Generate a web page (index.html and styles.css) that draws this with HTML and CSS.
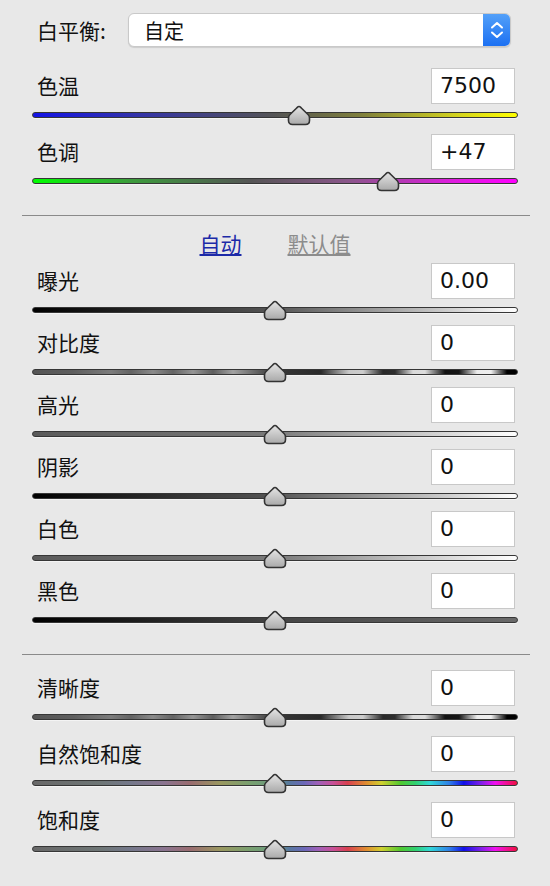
FILE: index.html
```html
<!doctype html>
<html>
<head>
    <title>基本</title>
    <meta charset="utf-8"/>
    <meta name="viewport" content="width=device-width, initial-scale=1"/>
    <link rel="stylesheet" href="styles.css">
</head>
<body>
<svg class="defs" width="0" height="0" aria-hidden="true">
    <defs>
        <linearGradient id="knob" x1="0" y1="0" x2="0" y2="1">
            <stop offset="0" stop-color="#e4e4e4"/>
            <stop offset="1" stop-color="#a9a9a9"/>
        </linearGradient>
    </defs>
</svg>

<div class="panel">
    <div class="wb">
        <span class="wb-label">白平衡:</span>
        <div class="select">
            <span class="select-text">自定</span>
            <span class="stepper">
                <svg width="28" height="34" viewBox="0 0 28 34">
                    <path d="M9 14.5 L14 10 L19 14.5" fill="none" stroke="#fff" stroke-width="2" stroke-linecap="round" stroke-linejoin="round"/>
                    <path d="M9 19.5 L14 24 L19 19.5" fill="none" stroke="#fff" stroke-width="2" stroke-linecap="round" stroke-linejoin="round"/>
                </svg>
            </span>
        </div>
    </div>

    <div class="group group-wide">
        <div class="ctl">
            <div class="head"><span class="label">色温</span><span class="value">7500</span></div>
            <div class="track t-temp"><svg class="thumb" style="left: 55%" viewBox="0 0 24 21"><path d="M12 1.5C13 1.5 13.5 2.2 14.3 3L21 9.5C22 10.5 22.5 11.5 22.5 13L22.5 15.5C22.5 18 21 19.5 18.5 19.5L5.5 19.5C3 19.5 1.5 18 1.5 15.5L1.5 13C1.5 11.5 2 10.5 3 9.5L9.7 3C10.5 2.2 11 1.5 12 1.5Z"/></svg></div>
        </div>
        <div class="ctl">
            <div class="head"><span class="label">色调</span><span class="value">+47</span></div>
            <div class="track t-tint"><svg class="thumb" style="left: 73.3%" viewBox="0 0 24 21"><path d="M12 1.5C13 1.5 13.5 2.2 14.3 3L21 9.5C22 10.5 22.5 11.5 22.5 13L22.5 15.5C22.5 18 21 19.5 18.5 19.5L5.5 19.5C3 19.5 1.5 18 1.5 15.5L1.5 13C1.5 11.5 2 10.5 3 9.5L9.7 3C10.5 2.2 11 1.5 12 1.5Z"/></svg></div>
        </div>
    </div>

    <hr class="rule">

    <div class="links">
        <a class="link-auto" href="#">自动</a>
        <a class="link-default" href="#">默认值</a>
    </div>

    <div class="group group-tight">
        <div class="ctl">
            <div class="head"><span class="label">曝光</span><span class="value">0.00</span></div>
            <div class="track t-exp"><svg class="thumb" style="left: 50%" viewBox="0 0 24 21"><path d="M12 1.5C13 1.5 13.5 2.2 14.3 3L21 9.5C22 10.5 22.5 11.5 22.5 13L22.5 15.5C22.5 18 21 19.5 18.5 19.5L5.5 19.5C3 19.5 1.5 18 1.5 15.5L1.5 13C1.5 11.5 2 10.5 3 9.5L9.7 3C10.5 2.2 11 1.5 12 1.5Z"/></svg></div>
        </div>
        <div class="ctl">
            <div class="head"><span class="label">对比度</span><span class="value">0</span></div>
            <div class="track t-bands"><svg class="thumb" style="left: 50%" viewBox="0 0 24 21"><path d="M12 1.5C13 1.5 13.5 2.2 14.3 3L21 9.5C22 10.5 22.5 11.5 22.5 13L22.5 15.5C22.5 18 21 19.5 18.5 19.5L5.5 19.5C3 19.5 1.5 18 1.5 15.5L1.5 13C1.5 11.5 2 10.5 3 9.5L9.7 3C10.5 2.2 11 1.5 12 1.5Z"/></svg></div>
        </div>
        <div class="ctl">
            <div class="head"><span class="label">高光</span><span class="value">0</span></div>
            <div class="track t-light"><svg class="thumb" style="left: 50%" viewBox="0 0 24 21"><path d="M12 1.5C13 1.5 13.5 2.2 14.3 3L21 9.5C22 10.5 22.5 11.5 22.5 13L22.5 15.5C22.5 18 21 19.5 18.5 19.5L5.5 19.5C3 19.5 1.5 18 1.5 15.5L1.5 13C1.5 11.5 2 10.5 3 9.5L9.7 3C10.5 2.2 11 1.5 12 1.5Z"/></svg></div>
        </div>
        <div class="ctl">
            <div class="head"><span class="label">阴影</span><span class="value">0</span></div>
            <div class="track t-exp"><svg class="thumb" style="left: 50%" viewBox="0 0 24 21"><path d="M12 1.5C13 1.5 13.5 2.2 14.3 3L21 9.5C22 10.5 22.5 11.5 22.5 13L22.5 15.5C22.5 18 21 19.5 18.5 19.5L5.5 19.5C3 19.5 1.5 18 1.5 15.5L1.5 13C1.5 11.5 2 10.5 3 9.5L9.7 3C10.5 2.2 11 1.5 12 1.5Z"/></svg></div>
        </div>
        <div class="ctl">
            <div class="head"><span class="label">白色</span><span class="value">0</span></div>
            <div class="track t-light"><svg class="thumb" style="left: 50%" viewBox="0 0 24 21"><path d="M12 1.5C13 1.5 13.5 2.2 14.3 3L21 9.5C22 10.5 22.5 11.5 22.5 13L22.5 15.5C22.5 18 21 19.5 18.5 19.5L5.5 19.5C3 19.5 1.5 18 1.5 15.5L1.5 13C1.5 11.5 2 10.5 3 9.5L9.7 3C10.5 2.2 11 1.5 12 1.5Z"/></svg></div>
        </div>
        <div class="ctl">
            <div class="head"><span class="label">黑色</span><span class="value">0</span></div>
            <div class="track t-dark"><svg class="thumb" style="left: 50%" viewBox="0 0 24 21"><path d="M12 1.5C13 1.5 13.5 2.2 14.3 3L21 9.5C22 10.5 22.5 11.5 22.5 13L22.5 15.5C22.5 18 21 19.5 18.5 19.5L5.5 19.5C3 19.5 1.5 18 1.5 15.5L1.5 13C1.5 11.5 2 10.5 3 9.5L9.7 3C10.5 2.2 11 1.5 12 1.5Z"/></svg></div>
        </div>
    </div>

    <hr class="rule">

    <div class="group group-wide">
        <div class="ctl">
            <div class="head"><span class="label">清晰度</span><span class="value">0</span></div>
            <div class="track t-bands"><svg class="thumb" style="left: 50%" viewBox="0 0 24 21"><path d="M12 1.5C13 1.5 13.5 2.2 14.3 3L21 9.5C22 10.5 22.5 11.5 22.5 13L22.5 15.5C22.5 18 21 19.5 18.5 19.5L5.5 19.5C3 19.5 1.5 18 1.5 15.5L1.5 13C1.5 11.5 2 10.5 3 9.5L9.7 3C10.5 2.2 11 1.5 12 1.5Z"/></svg></div>
        </div>
        <div class="ctl">
            <div class="head"><span class="label">自然饱和度</span><span class="value">0</span></div>
            <div class="track t-sat"><svg class="thumb" style="left: 50%" viewBox="0 0 24 21"><path d="M12 1.5C13 1.5 13.5 2.2 14.3 3L21 9.5C22 10.5 22.5 11.5 22.5 13L22.5 15.5C22.5 18 21 19.5 18.5 19.5L5.5 19.5C3 19.5 1.5 18 1.5 15.5L1.5 13C1.5 11.5 2 10.5 3 9.5L9.7 3C10.5 2.2 11 1.5 12 1.5Z"/></svg></div>
        </div>
        <div class="ctl">
            <div class="head"><span class="label">饱和度</span><span class="value">0</span></div>
            <div class="track t-sat"><svg class="thumb" style="left: 50%" viewBox="0 0 24 21"><path d="M12 1.5C13 1.5 13.5 2.2 14.3 3L21 9.5C22 10.5 22.5 11.5 22.5 13L22.5 15.5C22.5 18 21 19.5 18.5 19.5L5.5 19.5C3 19.5 1.5 18 1.5 15.5L1.5 13C1.5 11.5 2 10.5 3 9.5L9.7 3C10.5 2.2 11 1.5 12 1.5Z"/></svg></div>
        </div>
    </div>
</div>
</body>
</html>
```

FILE: styles.css
```css
body {
margin: 0;
padding: 0;
background-color: #e8e8e8;
color: #111;
font-family: "Noto Sans CJK SC", "DejaVu Sans", sans-serif;
}
.defs {
position: absolute;
}
.panel {
padding: 13px 20px 30px 22px;
}

/* white balance */
.wb {
display: flex;
align-items: center;
padding-left: 15px;
padding-right: 19px;
}
.wb-label {
width: 91px;
font-size: 21px;
line-height: 34px;
}
.select {
flex: 1;
display: flex;
align-items: center;
height: 34px;
box-sizing: border-box;
background-color: #fff;
border: 1px solid #c9c9c9;
border-radius: 6px;
box-shadow: 0 1px 1px rgba(0, 0, 0, 0.12);
overflow: hidden;
}
.select-text {
flex: 1;
padding-left: 15px;
font-size: 20px;
}
.stepper {
display: flex;
width: 28px;
height: 34px;
margin: -1px -1px -1px 0;
background: linear-gradient(#55a2f9, #1a6ff2);
}

/* sliders */
.group {
display: flex;
flex-direction: column;
padding: 0 12px 0 10px;
}
.group-wide {
gap: 16px;
margin-top: 21px;
}
.group-tight {
gap: 12px;
margin-top: 7px;
}
.rule + .group-wide {
margin-top: 15px;
}
.head {
display: flex;
justify-content: space-between;
align-items: center;
height: 36px;
margin-bottom: 8px;
}
.label {
padding-left: 5px;
padding-bottom: 3px;
font-size: 21px;
line-height: 30px;
}
.value {
width: 84px;
height: 36px;
margin-right: 3px;
box-sizing: border-box;
padding-left: 8px;
background-color: #fff;
border: 1px solid #c8c8c8;
font-family: "DejaVu Sans", sans-serif;
font-size: 22px;
line-height: 34px;
}
.track {
position: relative;
height: 6px;
box-sizing: border-box;
border: 1px solid #363636;
border-radius: 3px;
box-shadow: 0 1px 0 #f4f4f4;
}
.thumb {
position: absolute;
top: -8px;
width: 24px;
height: 21px;
margin-left: -12px;
fill: url(#knob);
stroke: #333;
stroke-width: 1.6;
}

.t-temp {
background: linear-gradient(to right, #1414e6 0%, #3434a8 22%, #555 50%, #80803c 68%, #d4d41e 88%, #ffff00 100%);
}
.t-tint {
background: linear-gradient(to right, #00ff00 0%, #3c9c3c 20%, #555 45%, #8a568a 65%, #dc1edc 86%, #ff00ff 100%);
}
.t-exp {
background: linear-gradient(to right, #000 0%, #555 50%, #fff 100%);
}
.t-light {
background: linear-gradient(to right, #5a5a5a 0%, #7a7a7a 50%, #fff 100%);
}
.t-dark {
background: linear-gradient(to right, #000 0%, #444 50%, #6a6a6a 100%);
}
.t-bands {
background: linear-gradient(to right,
    #555 0px, #5e5e5e 40px, #7c7c7c 78px, #636363 98px, #8a8a8a 120px, #646464 140px,
    #959595 160px, #5e5e5e 180px, #a2a2a2 200px, #4e4e4e 232px, #333 255px,
    #2a2a2a 288px, #c8c8c8 316px, #cdcdcd 330px, #292929 350px, #2e2e2e 362px,
    #dadada 380px, #dcdcdc 392px, #121212 412px, #161616 426px, #ececec 444px,
    #eeeeee 458px, #000 474px, #000 100%);
}
.t-sat {
background: linear-gradient(to right,
    #686868 0%, #6e7676 14%, #74788a 20%, #8a7490 27%, #9a6c70 32.5%, #9a9860 38.7%,
    #78a070 45%, #6a9a80 50%, #5878a0 53%, #6a68b8 56%, #a060b8 59%, #c85098 62%,
    #d84050 65%, #e09030 69%, #d0d030 72%, #50c830 76%, #30d070 79%, #30d8d8 82%,
    #3080e8 86%, #1010e8 89%, #8020e8 92.6%, #f010f0 95.5%, #f01040 100%);
}

.rule {
margin: 31px 0 0 0;
border: 0;
border-top: 1px solid #8a8a8a;
}

/* auto / default */
.links {
display: flex;
justify-content: center;
gap: 46px;
margin-top: 14px;
padding-right: 2px;
font-size: 21px;
line-height: 26px;
}
.link-auto:link, .link-auto:visited {
color: #1c2aa8;
}
.link-default:link, .link-default:visited {
color: #8c8c8c;
}
```
